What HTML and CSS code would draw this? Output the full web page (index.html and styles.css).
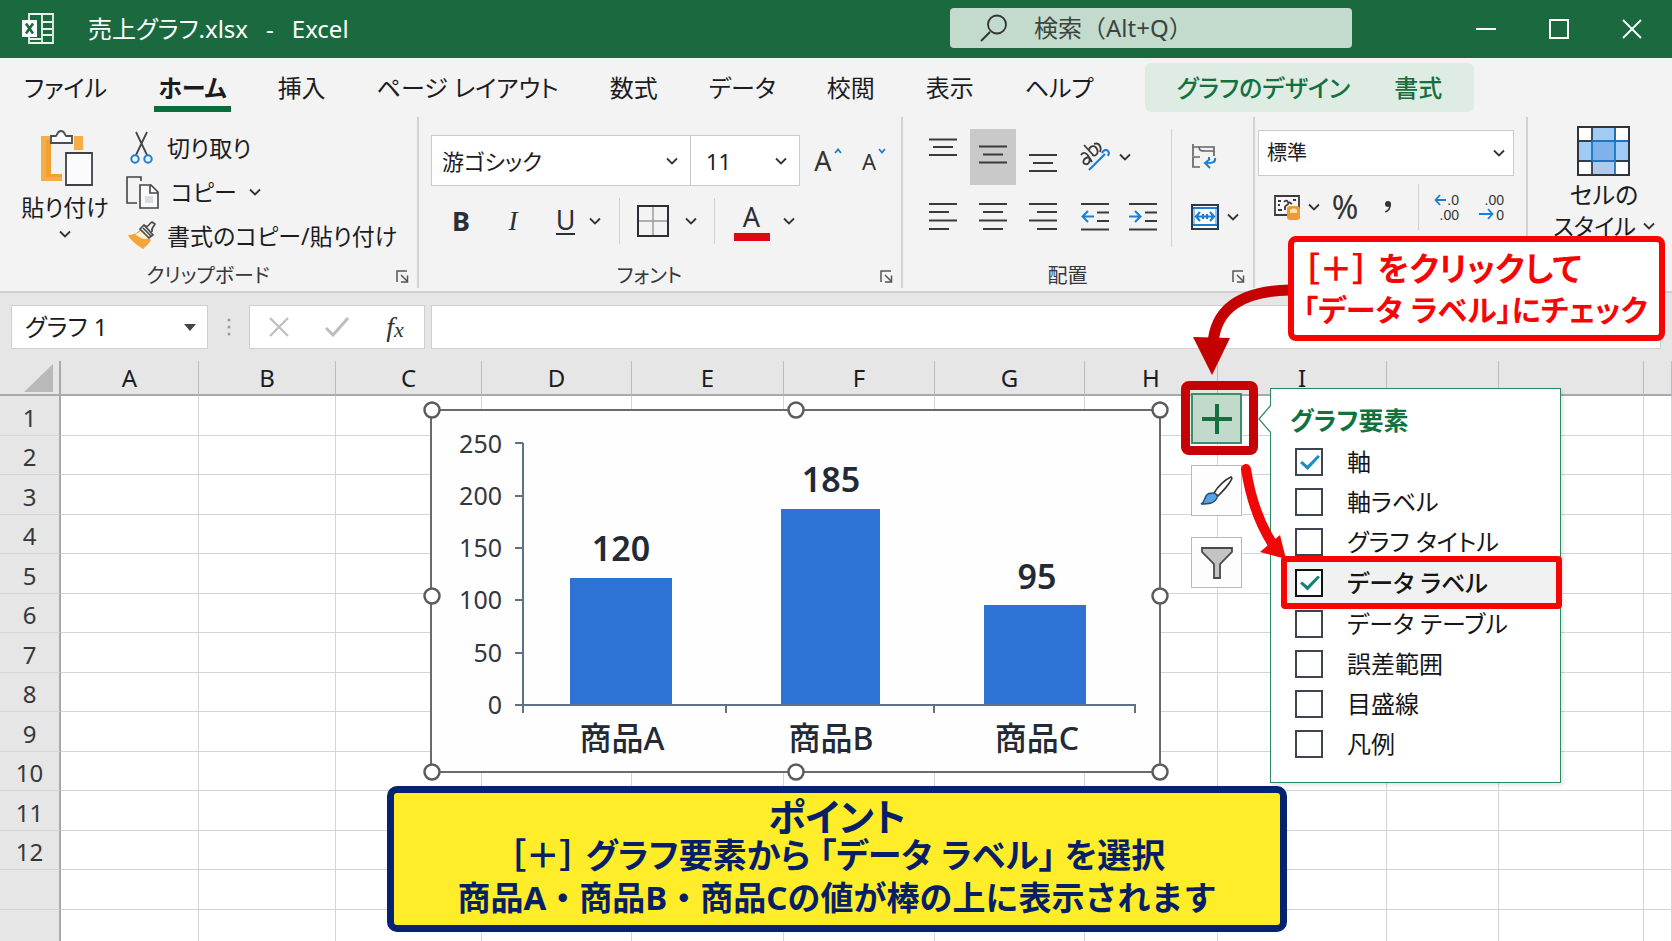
FILE: index.html
```html
<!DOCTYPE html>
<html lang="ja">
<head>
<meta charset="utf-8">
<meta name="viewport" content="width=device-width, initial-scale=1">
<title>売上グラフ.xlsx - Excel</title>
<link rel="stylesheet" href="styles.css">
</head>
<body>
<svg class="defs" aria-hidden="true">
  <symbol id="chev" viewBox="0 0 12 8"><path d="M1 1.5 6 6.5 11 1.5" fill="none" stroke="#333" stroke-width="1.8"/></symbol>
  <symbol id="launch" viewBox="0 0 13 13"><path d="M1 12V1h10M5 5l6 6M11.500 5.500V12H5" fill="none" stroke="#555" stroke-width="1.500"/></symbol>
</svg>
<div class="app">
  <header class="titlebar">
    <div class="doc">
      <svg class="logo" viewBox="0 0 32 32" width="32" height="32" aria-hidden="true">
        <path d="M7 1h24v29H7zM20 1v29M20 9h10M20 16h10M20 22h10M7 26h12" fill="none" stroke="#e8f3ec" stroke-width="1.800"/>
        <path d="M0 7h15v17H0z" fill="#fff"/>
        <path d="M4 10.500 11 20.500M11 10.500 4 20.500" stroke="#1b693f" stroke-width="2.600"/>
      </svg>
      <h1 class="doc-name">売上グラフ.xlsx<span class="dash">-</span>Excel</h1>
    </div>
    <label class="search">
      <svg viewBox="0 0 28 28" width="28" height="28" aria-hidden="true"><path d="M10 18 1 27" stroke="#333" stroke-width="2"/><circle cx="17" cy="10.500" r="9" fill="none" stroke="#333" stroke-width="1.800"/></svg>
      <input type="text" placeholder="検索（Alt+Q）" aria-label="検索">
    </label>
    <div class="window-controls">
      <button type="button" aria-label="最小化"><svg viewBox="0 0 20 20" width="20" height="20"><path d="M0 10h20" stroke="#fff" stroke-width="2"/></svg></button>
      <button type="button" aria-label="最大化"><svg viewBox="0 0 20 20" width="20" height="20"><path d="M1 1h18v18H1z" fill="none" stroke="#fff" stroke-width="2"/></svg></button>
      <button type="button" aria-label="閉じる"><svg viewBox="0 0 20 20" width="20" height="20"><path d="M1 1l18 18M19 1 1 19" stroke="#fff" stroke-width="1.800"/></svg></button>
    </div>
  </header>

  <nav class="tabs" aria-label="リボン">
    <button type="button">ファイル</button>
    <button type="button" class="current">ホーム</button>
    <button type="button">挿入</button>
    <button type="button">ページ レイアウト</button>
    <button type="button">数式</button>
    <button type="button">データ</button>
    <button type="button">校閲</button>
    <button type="button">表示</button>
    <button type="button">ヘルプ</button>
    <div class="context-tabs">
      <button type="button">グラフのデザイン</button>
      <button type="button">書式</button>
    </div>
  </nav>

  <section class="ribbon">
    <div class="group">
      <div class="clip">
        <button type="button" class="paste">
          <svg viewBox="0 0 52 56" width="52" height="56" aria-hidden="true">
            <path d="M0 6h10v38h11v7H0zM33 6h9v14h-9z" fill="#f5ad48"/><path d="M5 10h5v34h11v3H5z" fill="#f0a035"/>
            <path d="M10 13V6h5c1 0 1-5 5-5s4 5 5 5h6v7z" fill="#fff" stroke="#4a4d52" stroke-width="1.800"/>
            <path d="M25 23h26v32H25z" fill="#fbfbfb" stroke="#3d4045" stroke-width="1.800"/>
          </svg>
          <span>貼り付け</span>
          <svg class="chev" width="12" height="8"><use href="#chev"/></svg>
        </button>
        <div class="clip-list">
          <button type="button">
            <svg viewBox="0 0 34 34" width="34" height="34" aria-hidden="true"><path d="M11 1 22 24M22 1 11 24" stroke="#444" stroke-width="1.800"/><circle cx="10" cy="28" r="3.700" fill="none" stroke="#1a7fd4" stroke-width="2"/><circle cx="23" cy="28" r="3.700" fill="none" stroke="#1a7fd4" stroke-width="2"/></svg>
            <span>切り取り</span>
          </button>
          <button type="button" class="copy">
            <svg viewBox="0 0 34 34" width="34" height="34" aria-hidden="true"><path d="M12 28H2V2h14v4" fill="none" stroke="#444" stroke-width="1.600"/><path d="M15 10h11l7 7v16H15z" fill="#fafafa" stroke="#444" stroke-width="1.600"/><path d="M25 10v8h8" fill="none" stroke="#444" stroke-width="1.600"/><path d="M20 21h8v7h-8z" fill="#d9dce2"/></svg>
            <span>コピー</span>
            <svg class="chev" width="12" height="8"><use href="#chev"/></svg>
          </button>
          <button type="button">
            <svg viewBox="0 0 34 34" width="34" height="34" aria-hidden="true"><path d="M3 16c5 0 9-2 12-5l11 10c-2 4-6 7-8 9C12 26 6 22 3 16z" fill="#f3a53a"/><path d="M10 15c3-1 5-2 7-4l7 8c-4 2-8 1-14-4z" fill="#fdf0d8"/><path d="M15 10l4-4 9 10-4 3z" fill="#f3f3f3" stroke="#4a4a4a" stroke-width="1.700"/><path d="M20 7c4 2 4-3 7-4l3 2c-1 3-4 3-3 8M18 9l8 8" fill="none" stroke="#4a4a4a" stroke-width="1.700"/></svg>
            <span>書式のコピー/貼り付け</span>
          </button>
        </div>
      </div>
      <div class="group-foot foot-clip"><span>クリップボード</span><button type="button" aria-label="クリップボードの設定"><svg width="13" height="13"><use href="#launch"/></svg></button></div>
    </div>

    <div class="group">
      <div class="font-tools">
        <div class="row font-pick">
          <div class="combo combo-font"><select aria-label="フォント"><option>游ゴシック</option></select><svg class="chev" width="12" height="8"><use href="#chev"/></svg></div>
          <div class="combo combo-size"><select aria-label="フォント サイズ"><option>11</option></select><svg class="chev" width="12" height="8"><use href="#chev"/></svg></div>
          <button type="button" class="grow" aria-label="フォント サイズの拡大"><span>A</span><svg viewBox="0 0 8 6" width="8" height="6"><path d="M1 5l3-3.500L7 5" fill="none" stroke="#1a7fd4" stroke-width="1.800"/></svg></button>
          <button type="button" class="grow shrink" aria-label="フォント サイズの縮小"><span>A</span><svg viewBox="0 0 8 6" width="8" height="6"><path d="M1 1l3 3.500L7 1" fill="none" stroke="#1a7fd4" stroke-width="1.800"/></svg></button>
        </div>
        <div class="row font-style">
          <button type="button" class="bold">B</button>
          <button type="button" class="italic">I</button>
          <button type="button" class="under"><span>U</span><svg class="chev" width="12" height="8"><use href="#chev"/></svg></button>
          <i class="rule"></i>
          <button type="button" class="borders" aria-label="罫線"><svg viewBox="0 0 32 32" width="32" height="32"><path d="M16 2v28M2 16h28" stroke="#999" stroke-width="1.400"/><path d="M1 1h30v30H1z" fill="none" stroke="#2b2e35" stroke-width="2"/></svg><svg class="chev" width="12" height="8"><use href="#chev"/></svg></button>
          <i class="rule"></i>
          <button type="button" class="colour"><span>A</span><svg class="chev" width="12" height="8"><use href="#chev"/></svg></button>
        </div>
      </div>
      <div class="group-foot"><span>フォント</span><button type="button" aria-label="フォントの設定"><svg width="13" height="13"><use href="#launch"/></svg></button></div>
    </div>

    <div class="group">
      <div class="align-tools">
        <div class="align-main">
          <div class="row align-top">
            <button type="button" aria-label="上揃え"><svg viewBox="0 0 28 54" width="28" height="54"><path d="M0 9.500h28M4 17h20M0 25h28" stroke="#3a3a3a" stroke-width="1.800"/></svg></button>
            <button type="button" class="pressed" aria-label="上下中央揃え"><svg viewBox="0 0 28 54" width="28" height="54"><path d="M0 16.500h28M4 24.500h20M0 32.500h28" stroke="#3a3a3a" stroke-width="1.800"/></svg></button>
            <button type="button" aria-label="下揃え"><svg viewBox="0 0 28 54" width="28" height="54"><path d="M0 25h28M4 33h20M0 41h28" stroke="#3a3a3a" stroke-width="1.800"/></svg></button>
            <button type="button" class="orient" aria-label="方向"><svg viewBox="0 0 32 32" width="32" height="32"><g fill="none" stroke="#3a3a3a" stroke-width="1.800"><path d="M2 14c2-4 6-2 8 2l3 5M10 16c2 5-1 8-4 7s-2-6 4-7M5 4l10 11M10 9c1-5 6-5 8-1s-1 8-5 6M15 3c5-2 8 3 6 8"/></g><path d="M10 29 26 13M23 12c3-6 9-2 6 3" fill="none" stroke="#1a7fd4" stroke-width="2.200"/></svg><svg class="chev" width="12" height="8"><use href="#chev"/></svg></button>
          </div>
          <div class="row align-bottom">
            <button type="button" aria-label="左揃え"><svg viewBox="0 0 28 28" width="28" height="28"><path d="M0 1h28M0 9h20M0 17.500h28M0 26h20" stroke="#3a3a3a" stroke-width="1.800"/></svg></button>
            <button type="button" aria-label="中央揃え"><svg viewBox="0 0 28 28" width="28" height="28"><path d="M0 1h28M4 9h20M0 17.500h28M4 26h20" stroke="#3a3a3a" stroke-width="1.800"/></svg></button>
            <button type="button" aria-label="右揃え"><svg viewBox="0 0 28 28" width="28" height="28"><path d="M0 1h28M8 9h20M0 17.500h28M8 26h20" stroke="#3a3a3a" stroke-width="1.800"/></svg></button>
            <button type="button" class="outdent" aria-label="インデントを減らす"><svg viewBox="0 0 28 28" width="28" height="28"><path d="M0 1h28M16 9.500h12M16 18h12M0 26.500h28" stroke="#3a3a3a" stroke-width="1.800"/><path d="M13 13.500H2M7 8l-5.500 5.500L7 19" fill="none" stroke="#1a7fd4" stroke-width="2"/></svg></button>
            <button type="button" class="indent" aria-label="インデントを増やす"><svg viewBox="0 0 28 28" width="28" height="28"><path d="M0 1h28M16 9.500h12M16 18h12M0 26.500h28" stroke="#3a3a3a" stroke-width="1.800"/><path d="M0 13.500h11M6 8l5.500 5.500L6 19" fill="none" stroke="#1a7fd4" stroke-width="2"/></svg></button>
          </div>
        </div>
        <div class="align-side">
          <button type="button" aria-label="折り返して全体を表示する"><svg viewBox="0 0 26 26" width="26" height="26"><path d="M2 0v12M2 3h21v9M8 3c0 4 3 4 6 4h9M9 13H2v10h7" fill="none" stroke="#666" stroke-width="1.700"/><path d="M24 14c1 5-4 5-8 5M19 15l-5 4 5 5M18 13v4" fill="none" stroke="#1a7fd4" stroke-width="2"/></svg></button>
          <button type="button" aria-label="セルを結合して中央揃え"><svg viewBox="0 0 28 26" width="28" height="26"><path d="M1 1h26v24H1z" fill="#fff" stroke="#2b3a4a" stroke-width="2"/><path d="M2 4h24M2 21h24" stroke="#1a7fd4" stroke-width="2"/><path d="M3 5v15M25 5v15" stroke="#8dc2ee" stroke-width="2"/><path d="M6 12.500h16M9 8l-4 4.500L9 17M19 8l4 4.500L19 17M12 10v5M16 10v5" fill="none" stroke="#1a7fd4" stroke-width="2.200"/></svg><svg class="chev" width="12" height="8"><use href="#chev"/></svg></button>
        </div>
      </div>
      <div class="group-foot"><span>配置</span><button type="button" aria-label="配置の設定"><svg width="13" height="13"><use href="#launch"/></svg></button></div>
    </div>

    <div class="group">
      <div class="number-tools">
        <div class="combo combo-number"><select aria-label="表示形式"><option>標準</option></select><svg class="chev" width="12" height="8"><use href="#chev"/></svg></div>
        <div class="row number-row">
          <button type="button" class="money" aria-label="通貨表示形式"><svg viewBox="0 0 27 25" width="27" height="25"><path d="M1 1h24v19H1z" fill="#f7f7f7" stroke="#3a3a3a" stroke-width="1.800"/><path d="M4 6h3M4 10h2M4 15h4M19 5h3M10 7c3-4 6 2 3 3s-2 3-2 5M15 7l3 2" fill="none" stroke="#3a3a3a" stroke-width="1.800"/><rect x="13" y="11" width="13" height="14" rx="3" fill="#ee9c2f"/><path d="M16 15c2-2 6-2 7 0v3h-7z" fill="#fde3b5"/></svg><svg class="chev" width="12" height="8"><use href="#chev"/></svg></button>
          <button type="button" class="percent">%</button>
          <button type="button" class="comma" aria-label="桁区切り"><svg viewBox="0 0 8 14" width="8" height="14"><circle cx="4" cy="4" r="3" fill="#333"/><path d="M6.200 4c0 4-2 7-5 8" fill="none" stroke="#333" stroke-width="1.600"/></svg></button>
          <i class="rule"></i>
          <button type="button" class="decimals" aria-label="小数点以下の表示桁数を増やす"><svg viewBox="0 0 26 28" width="26" height="28"><path d="M12 7H2M6 2 1.500 7 6 12" fill="none" stroke="#1a7fd4" stroke-width="1.800"/><text x="25" y="12">.0</text><text x="25" y="27">.00</text></svg></button>
          <button type="button" class="decimals" aria-label="小数点以下の表示桁数を減らす"><svg viewBox="0 0 26 28" width="26" height="28"><path d="M0 21h13M9 16l4.500 5L9 26" fill="none" stroke="#1a7fd4" stroke-width="1.800"/><text x="25" y="12">.00</text><text x="25" y="27">0</text></svg></button>
        </div>
      </div>
    </div>

    <div class="group styles-group">
      <button type="button" class="cell-styles">
        <svg viewBox="0 0 53 50" width="53" height="50" aria-hidden="true"><path d="M1 1h51v48H1z" fill="#fff"/><path d="M15 1h23v14H15zM1 15h14v20H1zM38 15h14v20H38z" fill="#9fcbf5"/><path d="M15 15h23v20H15z" fill="#7fb2e8"/><path d="M15 35h23v14H15z" fill="#b3c9ea"/><path d="M15 1v14M38 1v14M1 35h51M15 35v14M1 15h14" stroke="#2f3d4d" stroke-width="1.800"/><path d="M15 15v20M38 1v48M15 15h37M15 35h23" stroke="#1e74c0" stroke-width="1.800"/><path d="M1 1h51v48H1z" fill="none" stroke="#303338" stroke-width="2"/></svg>
        <span>セルの</span>
        <span class="second">スタイル<svg class="chev" width="12" height="8"><use href="#chev"/></svg></span>
      </button>
    </div>
  </section>

  <section class="formula-bar">
    <div class="name-box"><input type="text" value="グラフ 1" aria-label="名前ボックス"><button type="button" aria-label="名前の一覧"><svg viewBox="0 0 12 7" width="12" height="7"><path d="M0 0h12L6 7z" fill="#444"/></svg></button></div>
    <svg class="dots" viewBox="0 0 4 18" width="4" height="18" aria-hidden="true"><circle cx="2" cy="2" r="1.500"/><circle cx="2" cy="9" r="1.500"/><circle cx="2" cy="16" r="1.500"/></svg>
    <div class="entry">
      <button type="button" aria-label="キャンセル"><svg viewBox="0 0 20 20" width="20" height="20"><path d="M1 1l18 18M19 1 1 19" stroke="#bdbdbd" stroke-width="2.200"/></svg></button>
      <button type="button" aria-label="入力"><svg viewBox="0 0 24 20" width="24" height="20"><path d="M1 11l7 7L23 1" fill="none" stroke="#bdbdbd" stroke-width="3"/></svg></button>
      <button type="button" class="fx">f<small>x</small></button>
    </div>
    <input class="formula" type="text" aria-label="数式バー">
  </section>

  <main class="sheet">
    <table>
      <colgroup><col class="c-head"><col class="c-a"><col class="c-b"><col class="c-c"><col class="c-d"><col class="c-e"><col class="c-f"><col class="c-d"><col class="c-h"><col class="c-i"><col class="c-j"><col class="c-k"><col></colgroup>
      <thead><tr><th class="corner"><svg viewBox="0 0 29 28" width="29" height="28" aria-hidden="true"><path d="M29 0v28H0z" fill="#b9b9b9"/></svg></th><th>A</th><th>B</th><th>C</th><th>D</th><th>E</th><th>F</th><th>G</th><th>H</th><th>I</th><th></th><th></th><th></th></tr></thead>
      <tbody>
        <tr><th>1</th><td></td><td></td><td></td><td></td><td></td><td></td><td></td><td></td><td></td><td></td><td></td><td></td></tr>
        <tr><th>2</th><td></td><td></td><td></td><td></td><td></td><td></td><td></td><td></td><td></td><td></td><td></td><td></td></tr>
        <tr><th>3</th><td></td><td></td><td></td><td></td><td></td><td></td><td></td><td></td><td></td><td></td><td></td><td></td></tr>
        <tr><th>4</th><td></td><td></td><td></td><td></td><td></td><td></td><td></td><td></td><td></td><td></td><td></td><td></td></tr>
        <tr><th>5</th><td></td><td></td><td></td><td></td><td></td><td></td><td></td><td></td><td></td><td></td><td></td><td></td></tr>
        <tr><th>6</th><td></td><td></td><td></td><td></td><td></td><td></td><td></td><td></td><td></td><td></td><td></td><td></td></tr>
        <tr><th>7</th><td></td><td></td><td></td><td></td><td></td><td></td><td></td><td></td><td></td><td></td><td></td><td></td></tr>
        <tr><th>8</th><td></td><td></td><td></td><td></td><td></td><td></td><td></td><td></td><td></td><td></td><td></td><td></td></tr>
        <tr><th>9</th><td></td><td></td><td></td><td></td><td></td><td></td><td></td><td></td><td></td><td></td><td></td><td></td></tr>
        <tr><th>10</th><td></td><td></td><td></td><td></td><td></td><td></td><td></td><td></td><td></td><td></td><td></td><td></td></tr>
        <tr><th>11</th><td></td><td></td><td></td><td></td><td></td><td></td><td></td><td></td><td></td><td></td><td></td><td></td></tr>
        <tr><th>12</th><td></td><td></td><td></td><td></td><td></td><td></td><td></td><td></td><td></td><td></td><td></td><td></td></tr>
        <tr><th></th><td></td><td></td><td></td><td></td><td></td><td></td><td></td><td></td><td></td><td></td><td></td><td></td></tr>
        <tr><th></th><td></td><td></td><td></td><td></td><td></td><td></td><td></td><td></td><td></td><td></td><td></td><td></td></tr>
      </tbody>
    </table>
  </main>

  <svg class="chart" viewBox="0 0 750 382" width="750" height="382" role="img" aria-label="商品別の売上グラフ">
    <path class="frame" d="M11 10h729v362H11z"/>
    <g class="bars"><path d="M150 178h102v127H150zM361 109h99v196h-99zM564 205h102v100H564z"/></g>
    <path class="axis" d="M103 43v270M95 43h8M95 96h8M95 148h8M95 200h8M95 253h8M95 305h620v8M306 305v8M514 305v8"/>
    <g class="scale"><text x="82" y="53">250</text><text x="82" y="105">200</text><text x="82" y="157">150</text><text x="82" y="209">100</text><text x="82" y="262">50</text><text x="82" y="314">0</text></g>
    <g class="values"><text x="201" y="161">120</text><text x="411" y="92">185</text><text x="617" y="189">95</text></g>
    <g class="cats"><text x="202" y="350">商品A</text><text x="411" y="350">商品B</text><text x="617" y="350">商品C</text></g>
    <g class="handles"><circle cx="12" cy="10" r="7.500"/><circle cx="376" cy="10" r="7.500"/><circle cx="740" cy="10" r="7.500"/><circle cx="12" cy="196" r="7.500"/><circle cx="740" cy="196" r="7.500"/><circle cx="12" cy="372" r="7.500"/><circle cx="376" cy="372" r="7.500"/><circle cx="740" cy="372" r="7.500"/></g>
  </svg>

  <div class="chart-buttons">
    <button type="button" class="add" aria-label="グラフ要素"><svg viewBox="0 0 32 32" width="32" height="32"><path d="M16 1v30M1 16h30" stroke="#107040" stroke-width="4"/></svg></button>
    <button type="button" aria-label="グラフ スタイル"><svg viewBox="0 0 34 32" width="34" height="32"><path d="M14 18C18 11 26 4 31 2c2 1 0 3-1 5-3 5-8 10-12 14z" fill="#fff" stroke="#333" stroke-width="1.600"/><path d="M13 18c3 0 5 3 4 5-3 6-9 6-16 6 4-2 3-5 5-8 1-2 4-3 7-3z" fill="#55a3e6" stroke="#2a4a66" stroke-width="1.400"/></svg></button>
    <button type="button" aria-label="グラフ フィルター"><svg viewBox="0 0 34 34" width="34" height="34"><path d="M2 2h30v4L20 18v14h-6V18L2 6z" fill="#c4c4c4" stroke="#4a4a4a" stroke-width="1.800"/></svg></button>
  </div>
  <div class="add-frame"></div>

  <form class="elements">
    <svg class="beak" viewBox="0 0 13 28" width="13" height="28" aria-hidden="true"><path d="M13 0 1 14l12 14" fill="#fff" stroke="#2b8a60" stroke-width="1.200"/></svg>
    <h2>グラフ要素</h2>
    <label><input type="checkbox" checked>軸</label>
    <label><input type="checkbox">軸ラベル</label>
    <label><input type="checkbox">グラフ タイトル</label>
    <label class="marked"><input type="checkbox" checked>データ ラベル</label>
    <label><input type="checkbox">データ テーブル</label>
    <label><input type="checkbox">誤差範囲</label>
    <label><input type="checkbox">目盛線</label>
    <label><input type="checkbox">凡例</label>
  </form>

  <svg class="arrows" viewBox="0 0 110 280" width="110" height="280" aria-hidden="true">
    <path d="M110 9C62 10 36 27 33 62" fill="none" stroke="#c40000" stroke-width="11"/>
    <path d="M13 56l37 1-18 37z" fill="#c40000"/>
    <path d="M66 188c4 26 12 52 26 74" fill="none" stroke="#f00808" stroke-width="10" stroke-linecap="round"/>
    <path d="M80 271l20-17 6 24z" fill="#f00808"/>
  </svg>
  <div class="callout">
    <p class="first">［＋］ をクリックして</p>
    <p>「データ ラベル」にチェック</p>
  </div>
  <div class="point">
    <h2>ポイント</h2>
    <p>［＋］ グラフ要素から 「データ ラベル」 を選択</p>
    <p class="last">商品A・商品B・商品Cの値が棒の上に表示されます</p>
  </div>
</div>
</body>
</html>
```
FILE: styles.css
```css
* { box-sizing: border-box; }
body {
  margin: 0;
  font-family: "Noto Sans", "Noto Sans CJK JP", sans-serif;
  font-size: 24px;
  line-height: 30px;
  font-feature-settings: "palt";
  color: #1c1c1f;
  background: #fff;
}
button, input, select {
  font: inherit;
  font-feature-settings: inherit;
  color: inherit;
  margin: 0;
  padding: 0;
  border: 0;
  background: none;
  border-radius: 0;
}
button { display: flex; align-items: center; justify-content: center; white-space: nowrap; }
svg { display: block; flex: none; }
h1, h2, p { margin: 0; font-size: inherit; font-weight: inherit; }
.defs { position: absolute; width: 0; height: 0; }
.app { position: relative; display: flex; flex-direction: column; height: 100vh; overflow: hidden; }
.row { display: flex; align-items: center; }
.rule { width: 1px; height: 46px; background: #d0d0d0; }

/* title bar */
.titlebar { display: flex; align-items: center; height: 58px; flex: none; background: #1b693f; color: #fff; }
.doc { flex: 1; display: flex; align-items: center; padding-left: 22px; gap: 34px; }
.doc-name { white-space: nowrap; }
.dash { margin: 0 18px; }
.search { display: flex; align-items: center; width: 402px; height: 40px; margin-bottom: 2px; padding-left: 30px; gap: 26px; border-radius: 4px; background: #c3dbcd; color: #333; }
.search input { flex: 1; min-width: 0; outline: 0; font-feature-settings: normal; }
.search input::placeholder { color: #3c443f; opacity: 1; }
.window-controls { display: flex; justify-content: flex-end; width: 320px; padding-right: 4px; }
.window-controls button { width: 73px; height: 56px; }

/* tabs */
.tabs { display: flex; align-items: center; flex: none; height: 59px; padding-left: 24px; background: #f3f3f3; gap: 51px; }
.tabs > button { height: 49px; }
.tabs .current { font-weight: 700; margin: 0 -4px; padding: 0 4px; border-bottom: 6px solid #0e6b3c; border-top: 6px solid transparent; }
.context-tabs { display: flex; gap: 44px; height: 49px; padding: 0 32px; background: #dfece4; border-radius: 6px; color: #13713f; font-weight: 500; }

/* ribbon */
.ribbon { display: grid; grid-template-columns: 419px 484px 352px 273px 1fr; flex: none; height: 176px; padding-bottom: 3px; background: #f3f3f3; border-bottom: 2px solid #d0d0d0; }
.group { display: flex; flex-direction: column; justify-content: space-between; border-right: 2px solid #d2d2d2; }
.group:last-child { border-right: 0; }
.group-foot { display: grid; grid-template-columns: 1fr 13px; align-items: center; height: 24px; padding-right: 8px; font-size: 20px; line-height: 24px; color: #37373a; }
.group-foot span { text-align: center; }
.foot-clip { padding-left: 20px; }
.clip { display: flex; padding: 9px 0 0 17px; font-size: 23px; }
.paste { flex-direction: column; justify-content: flex-start; width: 96px; padding-top: 4px; }
.paste svg:first-child { margin-left: 4px; }
.paste span { margin: 6px 0 8px; }
.clip-list { display: flex; flex-direction: column; padding-left: 12px; }
.clip-list button { justify-content: flex-start; gap: 8px; height: 44px; }
.clip-list .copy { gap: 12px; }

.font-tools { padding: 18px 0 0 12px; }
.combo { display: grid; grid-template-columns: 1fr 24px; align-items: center; height: 51px; background: #fff; border: 1px solid #cbcbcb; }
.combo select { grid-area: 1 / 1 / 2 / 3; appearance: none; width: 100%; height: 100%; padding-left: 10px; outline: 0; }
.combo .chev { grid-area: 1 / 2; pointer-events: none; }
.combo-font { width: 260px; font-size: 22px; }
.combo-size { width: 109px; border-left: 0; font-size: 22px; }
.combo-size select { padding-left: 15px; }
.grow { align-items: flex-start; width: 30px; margin-left: 13px; font-size: 27px; color: #333; }
.grow svg { margin: 2px 0 0 2px; }
.shrink { font-size: 22px; margin-left: 16px; }
.font-style { height: 60px; padding-top: 10px; color: #2b2e35; font-size: 27px; }
.bold { width: 60px; font-weight: 700; }
.italic { width: 44px; font-family: "Liberation Serif", serif; font-style: italic; }
.under { width: 84px; gap: 14px; padding-left: 3px; }
.under span { border-bottom: 2px solid #2b2e35; line-height: 26px; }
.borders { width: 94px; gap: 16px; }
.colour { width: 92px; padding-left: 6px; gap: 13px; }
.colour span { width: 36px; line-height: 32px; border-bottom: 8px solid #dc0814; }

.align-tools { display: flex; padding-top: 12px; }
.align-main { width: 269px; padding-left: 15px; border-right: 1px solid #d0d0d0; height: 118px; }
.align-top button { width: 50px; height: 56px; }
.align-top .pressed { width: 46px; margin: 0 2px; background: #c9c9c9; }
.align-top .orient { width: 74px; gap: 8px; }
.align-bottom { padding-top: 18px; }
.align-bottom button { width: 50px; }
.align-bottom .outdent { width: 54px; }
.align-bottom .indent { width: 42px; }
.align-side { display: flex; flex-direction: column; align-items: flex-start; padding: 15px 0 0 19px; gap: 34px; }
.align-side button { gap: 8px; }

.number-tools { padding: 13px 0 0 3px; }
.combo-number { width: 256px; height: 46px; font-size: 20px; grid-template-columns: 1fr 20px; }
.combo-number select { padding-left: 8px; }
.number-row { padding-top: 8px; }
.number-row .rule { margin-right: 5px; }
.money { width: 74px; padding-left: 16px; gap: 7px; justify-content: flex-start; }
.percent { width: 26px; font-size: 32px; color: #333; }
.comma { width: 60px; }
.decimals { width: 45px; }
.decimals svg { overflow: visible; }
.decimals text { font-family: "Liberation Sans", sans-serif; font-size: 14px; text-anchor: end; fill: #333; }
.styles-group { align-items: center; }
.cell-styles { flex-direction: column; padding-top: 9px; margin-left: 8px; }
.cell-styles span { margin-top: 6px; line-height: 26px; }
.cell-styles .second { display: flex; align-items: center; gap: 7px; font-size: 23px; line-height: 24px; }

/* formula bar */
.formula-bar { display: flex; flex: none; align-items: center; height: 68px; padding: 0 11px; background: #e6e6e7; }
.name-box { display: flex; width: 197px; height: 44px; background: #fff; border: 1px solid #cfcfd0; }
.name-box input { flex: 1; min-width: 0; padding-left: 13px; outline: 0; }
.name-box button { width: 34px; }
.dots { margin: 0 18px 0 19px; fill: #9a9a9a; }
.entry { display: grid; grid-template-columns: 1fr 1fr 1fr; width: 176px; height: 44px; background: #fff; border: 1px solid #cfcfd0; }
.fx { font: italic 28px/30px "Liberation Serif", serif; color: #333; }
.fx small { font-size: 22px; padding-top: 6px; }
.formula { flex: 1; min-width: 0; height: 44px; margin-left: 6px; background: #fff; border: 1px solid #cfcfd0; }

/* sheet */
.sheet { flex: 1; min-height: 0; overflow: hidden; background: #fff; }
table { width: 100%; table-layout: fixed; border-collapse: separate; border-spacing: 0; }
th, td { padding: 0; font-weight: 400; border-right: 1px solid #d5d5d8; border-bottom: 1px solid #d5d5d8; }
thead th { height: 35px; background: #e6e6e7; border-right-color: #bcbcbe; border-bottom: 2px solid #a9a9ab; }
thead .corner { border-right: 2px solid #a9a9ab; }
.corner svg { margin-left: 24px; }
tbody th { height: 39px; padding-top: 4px; background: #e6e6e7; color: #38383a; border-right: 2px solid #a9a9ab; }
tbody tr:nth-child(odd) th { height: 40px; }
.c-head { width: 61px; }
.c-a { width: 138px; }
.c-b { width: 137px; }
.c-c { width: 146px; }
.c-d { width: 150px; }
.c-e { width: 152px; }
.c-f { width: 151px; }
.c-h { width: 133px; }
.c-i { width: 169px; }
.c-j { width: 112px; }
.c-k { width: 145px; }

/* chart */
.chart { position: absolute; left: 420px; top: 400px; }
.frame { fill: #fefefe; stroke: #6a6a6a; stroke-width: 2; }
.bars { fill: #2e72d3; }
.axis { fill: none; stroke: #5f7186; stroke-width: 2; }
.scale { font-size: 25px; text-anchor: end; fill: #33373f; }
.values { font-size: 34px; font-weight: 600; text-anchor: middle; fill: #222a35; }
.cats { font-size: 32px; font-weight: 500; text-anchor: middle; fill: #222a35; }
.handles { fill: #fff; stroke: #5c5c5c; stroke-width: 2.5px; }
.chart-buttons { position: absolute; left: 1191px; top: 393px; display: flex; flex-direction: column; gap: 21px; }
.chart-buttons button { width: 51px; height: 51px; background: #fdfdfd; border: 1px solid #b4b9c4; }
.chart-buttons .add { background: #c1dacb; border: 2px solid #3b8f66; }
.add-frame { position: absolute; left: 1181px; top: 381px; width: 77px; height: 74px; border: 9px solid #c50205; border-radius: 8px; }

/* chart elements panel */
.elements { position: absolute; left: 1270px; top: 388px; width: 291px; height: 395px; padding: 15px 0 0; background: #fff; border: 1px solid #2b8a60; box-shadow: 2px 2px 4px rgba(0, 0, 0, .12); color: #151518; }
.elements h2 { padding-left: 19px; margin-bottom: 6px; font-size: 25px; line-height: 32px; font-weight: 700; color: #12713f; }
.elements label { display: flex; align-items: center; height: 40px; padding-left: 24px; gap: 24px; }
.beak { position: absolute; left: -13px; top: 16px; }
.elements input { appearance: none; position: relative; width: 28px; height: 28px; background: #fff; border: 2px solid #3d4450; }
.elements input:checked::before { content: ""; position: absolute; left: 3px; top: 5px; width: 20px; height: 15px; background: #1a8bc4; clip-path: polygon(0 54%, 11% 40%, 37% 70%, 89% 0, 100% 12%, 38% 100%); }
.elements .marked { position: relative; z-index: 1; height: 53px; margin: -6px -2px -5px 10px; padding-left: 8px; border: 6px solid #f70505; border-radius: 4px; background: #f1f1f1; font-weight: 500; }
.elements .marked input { border-color: #111; }
.elements .marked input::before { background: #0f8577; }

/* annotations */
.arrows { position: absolute; left: 1180px; top: 281px; }
.callout { position: absolute; left: 1288px; top: 236px; width: 377px; height: 105px; padding: 6px 0 0 9px; border: 6px solid #f70505; border-radius: 8px; background: #fff; color: #f70505; font-size: 30px; line-height: 41px; font-weight: 700; white-space: nowrap; }
.callout .first { font-size: 33px; }
.point { position: absolute; left: 387px; top: 786px; width: 900px; height: 146px; padding-top: 4px; border: 7px solid #05246f; border-radius: 10px; background: #ffed29; color: #061f66; font-size: 34px; font-weight: 700; line-height: 40px; text-align: center; white-space: nowrap; }
.point h2 { font-size: 38px; line-height: 38px; }
.point .last { font-size: 33px; line-height: 45px; font-feature-settings: normal; }
```
